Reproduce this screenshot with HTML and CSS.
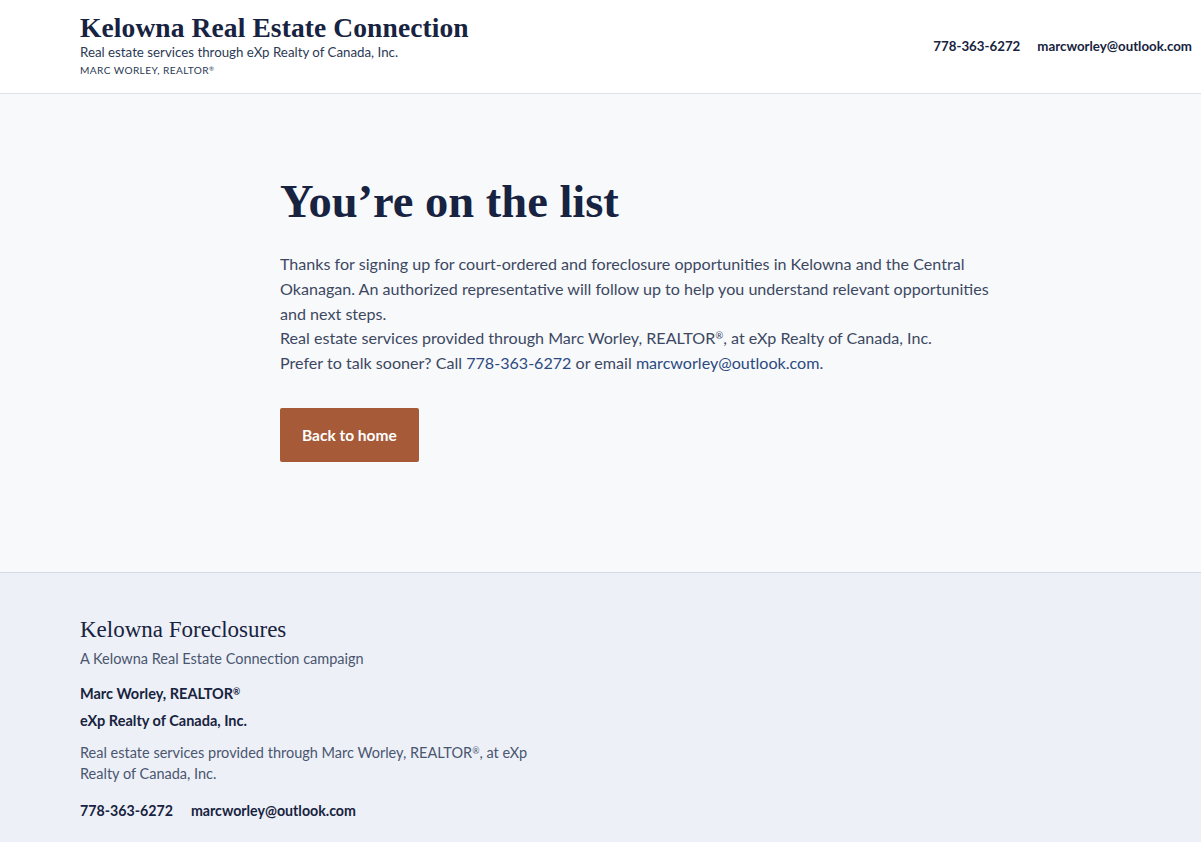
FILE: index.html
```html
<!DOCTYPE html>
<html lang="en">
<head>
<meta charset="utf-8">
<title>You're on the list | Kelowna Foreclosures</title>
<link rel="stylesheet" href="styles.css">
</head>
<body>
<header class="site-header">
  <div class="brand">
    <div class="brand-title">Kelowna Real Estate Connection</div>
    <div class="brand-sub">Real estate services through eXp Realty of Canada, Inc.</div>
    <div class="brand-agent">MARC WORLEY, REALTOR<sup>®</sup></div>
  </div>
  <nav class="header-contact">
    <a href="#">778-363-6272</a>
    <a href="#">marcworley@outlook.com</a>
  </nav>
</header>
<main class="main">
  <section class="thanks">
    <h1 class="thanks-title">You’re on the list</h1>
    <p class="thanks-text">Thanks for signing up for court-ordered and foreclosure opportunities in Kelowna and the Central Okanagan. An authorized representative will follow up to help you understand relevant opportunities and next steps.</p>
    <p class="thanks-text">Real estate services provided through Marc Worley, REALTOR<sup>®</sup>, at eXp Realty of Canada, Inc.</p>
    <p class="thanks-text">Prefer to talk sooner? Call <a class="link" href="#">778-363-6272</a> or email <a class="link" href="#">marcworley@outlook.com</a>.</p>
    <a class="btn" href="#">Back to home</a>
  </section>
</main>
<footer class="site-footer">
  <div class="footer-title">Kelowna Foreclosures</div>
  <div class="footer-tag">A Kelowna Real Estate Connection campaign</div>
  <div class="footer-strong first">Marc Worley, REALTOR<sup>®</sup></div>
  <div class="footer-strong">eXp Realty of Canada, Inc.</div>
  <p class="footer-note">Real estate services provided through Marc Worley, REALTOR<sup>®</sup>, at eXp<br>Realty of Canada, Inc.</p>
  <div class="footer-contact">
    <a href="#">778-363-6272</a>
    <a href="#">marcworley@outlook.com</a>
  </div>
</footer>
</body>
</html>
```
FILE: styles.css
```css
* { box-sizing: border-box; }
html, body { margin: 0; padding: 0; }
body {
  font-family: Lato, "Noto Sans", sans-serif;
  color: #172340;
  background: #eef1f6;
  width: 1201px;
  overflow-x: hidden;
}
a { color: inherit; text-decoration: none; }
sup { font-size: 0.6em; vertical-align: 0.5em; line-height: 0; }

.site-header {
  height: 94px;
  background: #ffffff;
  border-bottom: 1px solid #dde2ea;
  display: flex;
  justify-content: space-between;
  align-items: flex-start;
  padding: 12px 0 0 80px;
}
.brand-title {
  font-family: "Liberation Serif", serif;
  font-weight: 700;
  font-size: 27.5px;
  line-height: 32px;
  color: #172340;
  letter-spacing: 0.1px;
}
.brand-sub {
  font-size: 13.3px;
  line-height: 16px;
  margin-top: 0;
  color: #2c3a55;
}
.brand-agent {
  font-size: 10.1px;
  line-height: 14px;
  margin-top: 3px;
  letter-spacing: 0.4px;
  color: #2c3a55;
}
.header-contact {
  display: flex;
  gap: 17px;
  margin-top: 26px;
  margin-left: auto;
  margin-right: 9px;
  font-size: 13.3px;
  font-weight: 700;
  color: #172340;
}

.main {
  background: #f8f9fb;
  border-bottom: 1px solid #d4dbe6;
  padding: 80px 0 110px 280px;
}
.thanks { width: 712px; }
.thanks-title {
  font-family: "Liberation Serif", serif;
  font-weight: 700;
  font-size: 46.5px;
  line-height: 56px;
  margin: 0 0 22px;
  color: #172340;
}
.thanks-text {
  margin: 0;
  font-size: 16.1px;
  line-height: 24.8px;
  color: #3c4862;
}
.link { color: #2c4a82; }
.btn {
  display: inline-block;
  margin-top: 32px;
  background: #a65a38;
  color: #ffffff;
  font-weight: 700;
  font-size: 15.5px;
  line-height: 54px;
  height: 54px;
  padding: 0 22px;
  border-radius: 2px;
}

.site-footer {
  background: #edf0f6;
  padding: 43px 0 24px 80px;
  height: 270px;
}
.footer-title {
  font-family: "Liberation Serif", serif;
  font-size: 23px;
  line-height: 28px;
  color: #172340;
}
.footer-tag {
  font-size: 14.5px;
  line-height: 20px;
  margin-top: 5px;
  color: #4a5670;
}
.footer-strong {
  font-size: 14.5px;
  font-weight: 700;
  line-height: 20px;
  margin-top: 7px;
  color: #172340;
}
.footer-strong.first { margin-top: 15px; }
.footer-note {
  width: 460px;
  margin: 11px 0 0;
  font-size: 14.5px;
  line-height: 21px;
  color: #4a5670;
}
.footer-contact {
  display: flex;
  gap: 18px;
  margin-top: 18px;
  font-size: 14.2px;
  font-weight: 700;
  color: #172340;
}
```
